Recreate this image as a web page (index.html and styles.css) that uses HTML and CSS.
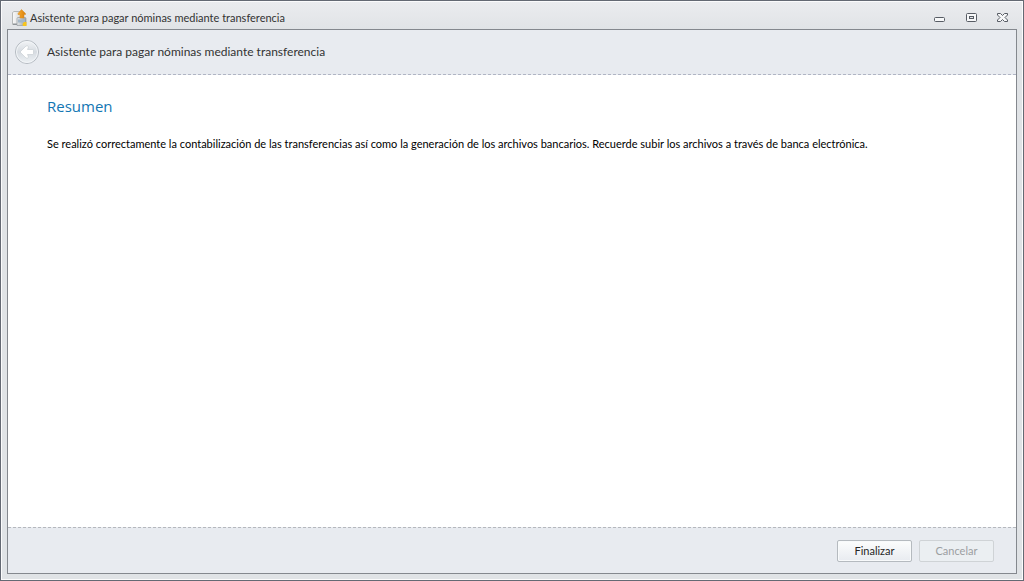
FILE: index.html
```html
<!DOCTYPE html>
<html lang="es">
<head>
<meta charset="utf-8">
<meta name="viewport" content="width=device-width, initial-scale=1">
<title>Asistente para pagar nóminas mediante transferencia</title>
<link rel="stylesheet" href="styles.css">
</head>
<body>
<div class="window">
  <header class="titlebar">
    <svg class="app-icon" width="16" height="18" viewBox="0 0 16 18" aria-hidden="true">
      <defs>
        <linearGradient id="cup" x1="0" x2="1"><stop offset="0" stop-color="#e4e7e8"/><stop offset="1" stop-color="#999fa4"/></linearGradient>
        <linearGradient id="paper" x1="0" x2="1"><stop offset="0" stop-color="#fafafa"/><stop offset="1" stop-color="#d2d4d4"/></linearGradient>
        <linearGradient id="arrow" x1="0" x2="1"><stop offset="0" stop-color="#f9a92c"/><stop offset="1" stop-color="#d8800c"/></linearGradient>
      </defs>
      <path d="M.5 3.500L2 2.500H10V15.500H.5Z" fill="url(#paper)" stroke="#b6b9b9"/>
      <path d="M1 14.500H5V16H1Z" fill="#8f9498"/>
      <path d="M5 9.500Q5 8.500 6 8.500H13Q14 8.500 14 9.500V16.500H5Z" fill="url(#cup)" stroke="#969ca1" stroke-width=".7"/>
      <path d="M6 10.500H13V13.500H6Z" fill="#a3b7c8"/>
      <path d="M9.500 .5L13.500 4.500V5.500H12V9H8V5.500H6V4.500Z" fill="url(#arrow)" stroke="#d58a20" stroke-width=".5"/>
      <path d="M12 13H14.500V17H11L10.500 15Z" fill="#f7c51c"/>
    </svg>
    <h1 class="title">Asistente para pagar nóminas mediante transferencia</h1>
    <div class="window-controls">
      <button class="control" type="button" aria-label="Minimizar">
        <svg width="13" height="11" viewBox="0 0 13 11"><rect x="2.500" y="5.500" width="10" height="4" rx="1" fill="#f7f8f9" stroke="#575c64"/></svg>
      </button>
      <button class="control" type="button" aria-label="Maximizar">
        <svg width="13" height="11" viewBox="0 0 13 11"><rect x="2.500" y="1.500" width="10" height="8" rx="1" fill="#f7f8f9" stroke="#575c64"/><rect x="5.500" y="4.500" width="4" height="2" fill="#e4e6e9" stroke="#575c64"/></svg>
      </button>
      <button class="control" type="button" aria-label="Cerrar">
        <svg width="13" height="11" viewBox="0 0 13 11"><path d="M1.500 1.500H4.500L6.500 3.500L8.500 1.500H11.500V3L9 5.500L11.500 8V9.500H8.500L6.500 7.500L4.500 9.500H1.500V8L4 5.500L1.500 3Z" fill="#f7f8f9" stroke="#575c64" stroke-linejoin="round"/></svg>
      </button>
    </div>
  </header>
  <main class="wizard">
    <div class="wizard-header">
      <button class="back" type="button" aria-label="Atrás" disabled>
        <svg width="26" height="26" viewBox="0 0 26 26">
          <defs>
            <linearGradient id="disc" x1="0" y1="0" x2="0" y2="1"><stop offset="0" stop-color="#f3f5f7"/><stop offset=".5" stop-color="#d6dbe1"/><stop offset="1" stop-color="#eef2f5"/></linearGradient>
          </defs>
          <circle cx="13" cy="13" r="11.500" fill="url(#disc)" stroke="#b4bac1"/>
          <circle cx="13" cy="13" r="10.500" fill="none" stroke="#f2f5f8"/>
          <path d="M6 13L12 7Q14 6 14.500 8L13.500 10.500H18.500Q19.500 10.500 19.500 11.500V14.500Q19.500 15.500 18.500 15.500H13.500L14.500 18Q14 20 12 19Z" fill="#fff" stroke="#c3c9cf" stroke-width=".6" stroke-linejoin="round"/>
        </svg>
      </button>
      <span class="wizard-title">Asistente para pagar nóminas mediante transferencia</span>
    </div>
    <section class="page">
      <h2 class="page-title">Resumen</h2>
      <p class="message">Se realizó correctamente la contabilización de las transferencias así como la generación de los archivos bancarios. Recuerde subir los archivos a través de banca electrónica.</p>
    </section>
    <footer class="actions">
      <button class="button" type="button">Finalizar</button>
      <button class="button" type="button" disabled>Cancelar</button>
    </footer>
  </main>
</div>
</body>
</html>
```
FILE: styles.css
```css
* { box-sizing: border-box; }

body {
  margin: 0;
  font-family: Lato, "Open Sans", sans-serif;
  font-size: 11px;
  color: #333;
}

.window {
  display: flex;
  flex-direction: column;
  min-height: 100vh;
  padding: 0 6px 6px;
  border: 1px solid #646973;
  background: linear-gradient(#ebecef, #e0e3e6 30px);
  box-shadow: inset 0 0 0 1px #fbfbfc;
}

.titlebar {
  display: flex;
  align-items: center;
  height: 28px;
  padding: 5px 8px 0 5px;
}

.app-icon { flex: none; margin-right: 2px; }

.title {
  flex: 1;
  margin: 0;
  font-size: 11px;
  font-weight: 400;
  line-height: 16px;
  white-space: nowrap;
}

.window-controls { display: flex; gap: 19px; }

.control,
.back {
  display: block;
  padding: 0;
  border: 0;
  background: none;
}

.control svg,
.back svg { display: block; }

.wizard {
  display: flex;
  flex: 1;
  flex-direction: column;
  border: 1px solid #84888e;
  background: #fff;
}

.wizard-header {
  display: flex;
  align-items: center;
  gap: 7px;
  height: 45px;
  padding: 0 6px;
  border-bottom: 1px dashed #b0b5c4;
  background: #e8ebf0;
}

.wizard-title { font-size: 12px; line-height: 16px; }

.page { flex: 1; padding: 19px 39px; }

.page-title {
  margin: 0 0 17px;
  color: #1376b3;
  font-family: "Open Sans", sans-serif;
  font-size: 15px;
  font-weight: 400;
  line-height: 24px;
}

.message {
  margin: 0;
  color: #000;
  line-height: 18px;
}

.actions {
  display: flex;
  justify-content: flex-end;
  align-items: center;
  gap: 7px;
  height: 46px;
  padding: 0 22px;
  border-top: 1px dashed #b5b8bd;
  background: #e8ebf0;
}

.button {
  width: 75px;
  height: 22px;
  padding: 0;
  border: 1px solid #b5babf;
  border-radius: 2px;
  background: linear-gradient(#fcfdfd, #e8ebf0);
  box-shadow: inset 0 0 0 1px #f8fafb;
  color: #262626;
  font: inherit;
}

.button:disabled {
  border-color: #cfd3d6;
  background: #ebeff2;
  box-shadow: none;
  color: #9b9ea1;
}
```
